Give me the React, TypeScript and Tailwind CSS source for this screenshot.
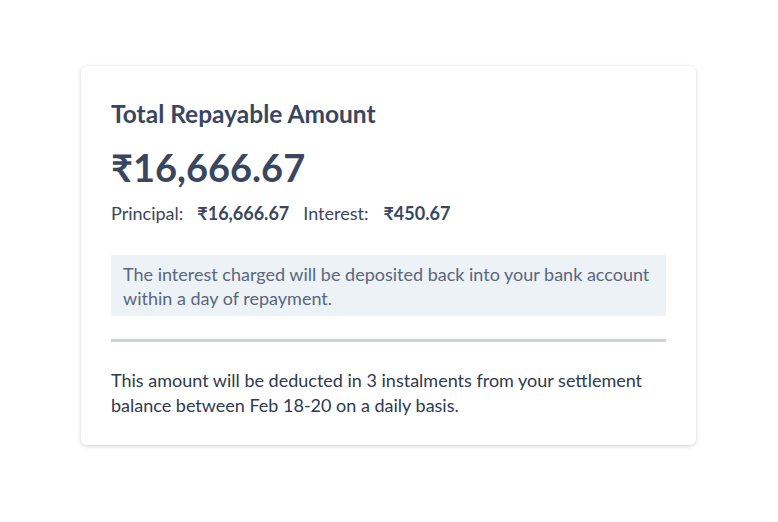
export default function App() {
  return (
    <div
      className="flex min-h-[522px] justify-center bg-white pt-[66px]"
      style={{ fontFamily: 'Lato, "Open Sans", sans-serif' }}
    >
      <div className="ml-[-1px] h-[379px] w-[615px] rounded-md bg-white px-[30px] pt-[34px] shadow-[0_1px_4px_rgba(0,0,0,0.18)]">
        <h2 className="text-[24.5px] font-bold leading-[28px] text-[#3a4660]">
          Total Repayable Amount
        </h2>
        <div className="mt-[17px] text-[38px] font-bold leading-[44px] text-[#3a4660]">
          ₹16,666.67
        </div>
        <div className="mt-[12px] flex items-center text-[18px] leading-[24px] text-[#3a4660]">
          <span>Principal:</span>
          <span className="ml-[14px] font-bold">₹16,666.67</span>
          <span className="ml-[14px]">Interest:</span>
          <span className="ml-[15px] font-bold">₹450.67</span>
        </div>
        <div className="mt-[30px] bg-[#edf2f7] px-[12px] pb-[6px] pt-[7px] text-[18px] leading-[24px] text-[#5a667c]">
          The interest charged will be deposited back into your bank account
          within a day of repayment.
        </div>
        <div className="mt-[23px] h-[3px] bg-[#cdd2dc]" />
        <p className="mt-[26px] text-[18px] leading-[25px] text-[#2f3a4f]">
          This amount will be deducted in 3 instalments from your settlement
          balance between Feb 18-20 on a daily basis.
        </p>
      </div>
    </div>
  )
}
